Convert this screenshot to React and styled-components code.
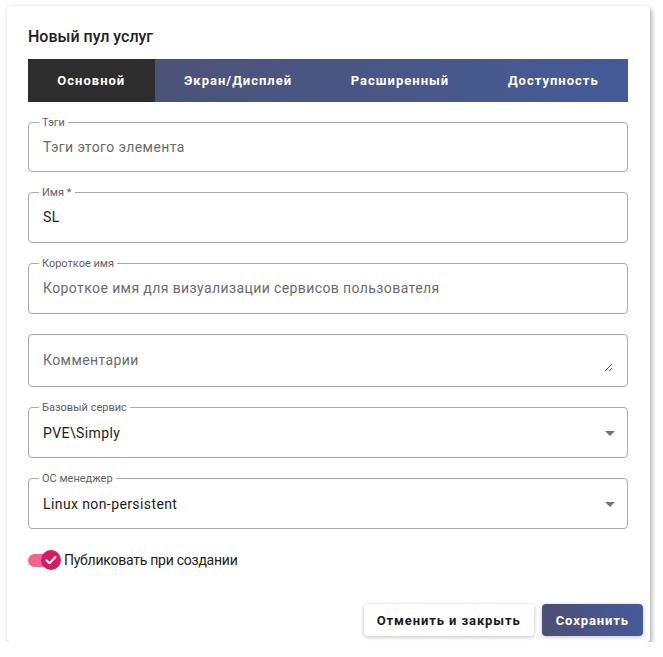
import React from 'react';
import styled, { createGlobalStyle } from 'styled-components';

const Global = createGlobalStyle`
  html, body { margin: 0; padding: 0; background: #fff; }
  body { font-family: Roboto, "Noto Sans", "Liberation Sans", sans-serif; }
  * { box-sizing: border-box; }
`;

const Dialog = styled.div`
  margin: 6px 0 0 7px;
  width: 643px;
  height: 636px;
  background: #fff;
  border-radius: 4px;
  box-shadow: 2px 3px 5px rgba(0, 0, 0, 0.28), 0 0 4px rgba(0, 0, 0, 0.08);
  display: flex;
  flex-direction: column;
`;

const Content = styled.div`
  padding: 19px 22px 0 21px;
  display: flex;
  flex-direction: column;
`;

const Title = styled.h2`
  margin: 0;
  font-size: 16px;
  font-weight: 500;
  line-height: 24px;
  color: #212121;
`;

const TabBar = styled.div`
  margin-top: 10px;
  height: 43px;
  display: flex;
  background: linear-gradient(90deg, #4d5174 0%, #4a5580 45%, #445b99 100%);
`;

const Tab = styled.div`
  flex: 1 1 auto;
  display: flex;
  align-items: center;
  justify-content: center;
  padding: 0 10px;
  color: #fff;
  font-size: 13px;
  font-weight: 700;
  letter-spacing: 1px;
  white-space: nowrap;
  background: ${(p) => (p.$active ? '#2d2d2d' : 'transparent')};
`;

const Fields = styled.div`
  margin-top: 20px;
  display: flex;
  flex-direction: column;
  gap: 20px;
`;

const Field = styled.div`
  position: relative;
  height: ${(p) => p.$h || 51}px;
  border: 1px solid #a9a9a9;
  border-radius: 4px;
  display: flex;
  align-items: center;
  padding: 0 ${(p) => (p.$select ? 5 : 14)}px ${(p) => (p.$select ? 0 : 1)}px 14px;
`;

const Legend = styled.span`
  position: absolute;
  top: -7px;
  left: 10px;
  padding: 0 3px;
  background: #fff;
  font-size: 11px;
  line-height: 13px;
  color: #616161;
`;

const Input = styled.input`
  flex: 1;
  border: 0;
  outline: 0;
  padding: 0;
  margin: 0;
  background: transparent;
  font-family: inherit;
  font-size: 14px;
  letter-spacing: 0.4px;
  color: #1c1c1c;
  &::placeholder { color: #6b6b6b; opacity: 1; }
`;

const TextArea = styled.textarea`
  flex: 1;
  height: 24px;
  border: 0;
  outline: 0;
  padding: 0;
  margin: 0;
  background: transparent;
  font-family: inherit;
  font-size: 14px;
  line-height: 24px;
  letter-spacing: 0.4px;
  resize: vertical;
  color: #1c1c1c;
  &::placeholder { color: #6b6b6b; opacity: 1; }
`;

const Value = styled.div`
  flex: 1;
  font-size: 14px;
  letter-spacing: 0.4px;
  color: #1c1c1c;
`;

const Arrow = styled.svg`
  width: 24px;
  height: 24px;
  fill: #757575;
  flex: none;
`;

const SwitchRow = styled.label`
  margin-top: 19px;
  height: 24px;
  display: flex;
  align-items: center;
  gap: 3px;
  font-size: 14px;
  letter-spacing: -0.25px;
  color: #212121;
`;

const Switch = styled.span`
  position: relative;
  width: 33px;
  height: 20px;
  flex: none;
  display: flex;
  align-items: center;
`;

const Track = styled.span`
  width: 30px;
  height: 13px;
  border-radius: 7px;
  background: #f0668f;
`;

const Thumb = styled.svg`
  position: absolute;
  right: 0;
  top: 0;
  width: 20px;
  height: 20px;
`;

const Actions = styled.div`
  margin-top: auto;
  padding: 8px 7px 6px;
  display: flex;
  justify-content: flex-end;
  gap: 8px;
`;

const Button = styled.button`
  height: 32px;
  border: 0;
  border-radius: 4px;
  padding: 0 ${(p) => (p.$primary ? 14 : 13)}px;
  font-family: inherit;
  font-size: 13px;
  font-weight: 700;
  letter-spacing: 0.9px;
  color: ${(p) => (p.$primary ? '#fff' : '#1a1a1a')};
  background: ${(p) => (p.$primary ? 'linear-gradient(90deg, #4b4f72, #455a9a)' : '#fff')};
  box-shadow: 0 1px 4px rgba(0, 0, 0, 0.25);
`;

const tabs = ['Основной', 'Экран/Дисплей', 'Расширенный', 'Доступность'];

function SelectField({ label, value }) {
  return (
    <Field $select>
      <Legend>{label}</Legend>
      <Value>{value}</Value>
      <Arrow viewBox="0 0 24 24"><path d="M7 10l5 5 5-5z" /></Arrow>
    </Field>
  );
}

export default function App() {
  return (
    <>
      <Global />
      <Dialog>
        <Content>
          <Title>Новый пул услуг</Title>
          <TabBar>
            {tabs.map((t, i) => (
              <Tab key={t} $active={i === 0}>{t}</Tab>
            ))}
          </TabBar>
          <Fields>
            <Field $h={50}>
              <Legend>Тэги</Legend>
              <Input placeholder="Тэги этого элемента" readOnly />
            </Field>
            <Field>
              <Legend>Имя *</Legend>
              <Input defaultValue="SL" readOnly />
            </Field>
            <Field>
              <Legend>Короткое имя</Legend>
              <Input placeholder="Короткое имя для визуализации сервисов пользователя" readOnly />
            </Field>
            <Field $h={53}>
              <TextArea placeholder="Комментарии" readOnly />
            </Field>
            <SelectField label="Базовый сервис" value="PVE\Simply" />
            <SelectField label="ОС менеджер" value="Linux non-persistent" />
          </Fields>
          <SwitchRow>
            <Switch>
              <Track />
              <Thumb viewBox="0 0 20 20">
                <circle cx="10" cy="10" r="10" fill="#d81b60" />
                <path d="M5.5 10.2l3 3 6-6.2" fill="none" stroke="#fff" strokeWidth="2" strokeLinecap="round" strokeLinejoin="round" />
              </Thumb>
            </Switch>
            Публиковать при создании
          </SwitchRow>
        </Content>
        <Actions>
          <Button>Отменить и закрыть</Button>
          <Button $primary>Сохранить</Button>
        </Actions>
      </Dialog>
    </>
  );
}
